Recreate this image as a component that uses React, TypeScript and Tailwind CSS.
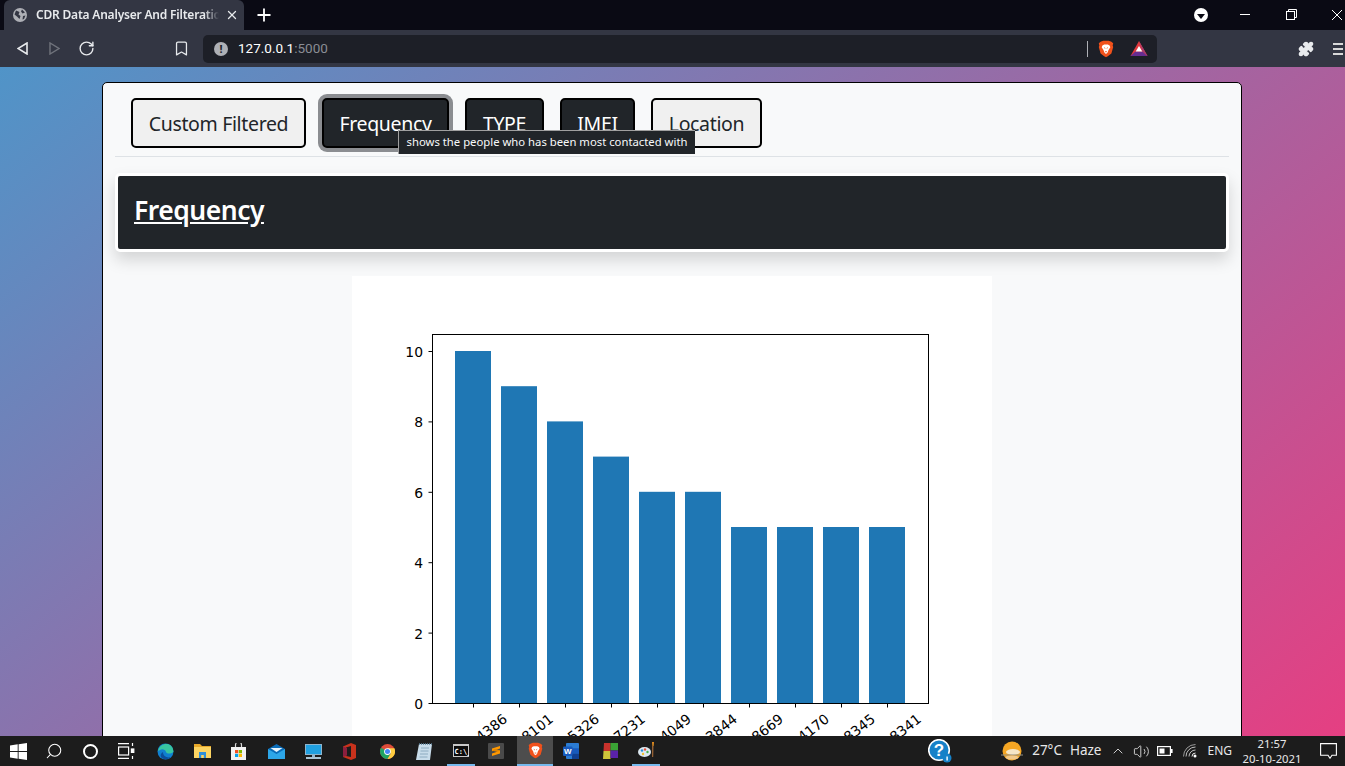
import { Search, Plus, X, Bookmark, RotateCw, Puzzle, ChevronUp, Volume2 } from 'lucide-react';

const bars = [
  { value: 10, label: '9876544386' },
  { value: 9, label: '9812308101' },
  { value: 8, label: '9845615326' },
  { value: 7, label: '9823117231' },
  { value: 6, label: '9812344049' },
  { value: 6, label: '9867123844' },
  { value: 5, label: '9834558669' },
  { value: 5, label: '9876114170' },
  { value: 5, label: '9800128345' },
  { value: 5, label: '9877108341' },
];

const chartFont = '"DejaVu Sans", sans-serif';

function FrequencyChart() {
  const y = (v: number) => 427 - v * 35.2;
  return (
    <svg width="640" height="480" viewBox="0 0 640 480" className="block">
      <rect width="640" height="480" fill="#ffffff" />
      {bars.map((b, i) => (
        <rect key={b.label} x={103 + i * 46} y={y(b.value)} width="36" height={b.value * 35.2} fill="#1f77b4" />
      ))}
      <rect x="80.5" y="58.5" width="496" height="369" fill="none" stroke="#000" strokeWidth="1" />
      {[0, 2, 4, 6, 8, 10].map((v) => (
        <g key={v}>
          <line x1="76.5" x2="80" y1={y(v) + 0.5} y2={y(v) + 0.5} stroke="#000" />
          <text x="71" y={y(v) + 6} textAnchor="end" fontSize="13.9" fontFamily={chartFont} fill="#000">
            {v}
          </text>
        </g>
      ))}
      {bars.map((b, i) => {
        const tx = 121.5 + i * 46;
        return (
          <g key={b.label}>
            <line x1={tx} x2={tx} y1="428" y2="431.5" stroke="#000" />
            <text
              x={tx}
              y="472"
              textAnchor="middle"
              fontSize="13.9"
              fontFamily={chartFont}
              fill="#000"
              transform={`rotate(-38 ${tx} 472)`}
            >
              {b.label}
            </text>
          </g>
        );
      })}
    </svg>
  );
}

function BraveLion({ size = 20 }: { size?: number }) {
  return (
    <svg width={size} height={size} viewBox="0 0 20 20">
      <path d="M4 2 L7 .8 h6 L16 2 l2 1.500 -.6 2.600 .6 1.800 -2 7 -4 3.200 -2 1 -2 -1 -4 -3.200 -2 -7 .6 -1.800 -.6 -2.600z" fill="#f1511b" />
      <path d="M6 6 l2 -1 h4 l2 1 .8 2 -2 3 -1 3 -1.800 1.500 -1.800 -1.500 -1 -3 -2 -3z" fill="#fff" />
      <path d="M8 8.500 l1.200 .8 M12 8.500 l-1.200 .8 M9 13 h2" stroke="#f1511b" strokeWidth="1" />
    </svg>
  );
}

function BatTriangle() {
  return (
    <svg width="18" height="17" viewBox="0 0 18 17">
      <path d="M9 1 L17.500 16 H.5z" fill="#e0393e" />
      <path d="M.5 16 L5.500 11.500 H12.500 L17.500 16z" fill="#662d91" />
      <path d="M9 1 L17.500 16 L12.500 11.500z" fill="#a83c6f" />
      <path d="M9 6 L12.300 11.600 H5.700z" fill="#fff" />
    </svg>
  );
}

function WindowsLogo() {
  return (
    <svg width="17" height="17" viewBox="0 0 17 17" fill="#fff">
      <path d="M0 2.500 7.700 1.300V8H0zM8.600 1.200 17 0v8H8.600zM0 9h7.700v6.700L0 14.500zM8.600 9H17v8l-8.400-1.200z" />
    </svg>
  );
}

function TaskView() {
  return (
    <svg width="17" height="16" viewBox="0 0 17 16" fill="none" stroke="#fff" strokeWidth="1.2">
      <path d="M0 .6h11M0 15.400h11" />
      <rect x=".6" y="4" width="10" height="8" />
      <path d="M14.500 0v3M14.500 13v3" />
      <rect x="13.400" y="6" width="2.400" height="3.400" fill="#fff" />
    </svg>
  );
}

function Edge() {
  return (
    <svg width="17" height="17" viewBox="0 0 17 17">
      <circle cx="8.500" cy="8.500" r="8" fill="#0f7fd0" />
      <path d="M1 8 C2 2 8 0 12 1.500 C15 2.800 16.700 6 16.300 9 C14 11 10 11 9 9 C8.500 6.500 5 5.500 3 7z" fill="#38c5a0" />
      <path d="M6 9 C6 13 10 15.500 14 14 C11 17 6 17 4 14 C3 12 4 10 6 9z" fill="#0b4e9c" />
    </svg>
  );
}

function Explorer() {
  return (
    <svg width="17" height="16" viewBox="0 0 17 16">
      <path d="M0 1h6l2 2h9v12H0z" fill="#e8a92a" />
      <path d="M0 4h17v11H0z" fill="#fcd462" />
      <path d="M5 9h7v6h-2.200v-3H7.200v3H5z" fill="#2f8fd8" />
    </svg>
  );
}

function Store() {
  return (
    <svg width="15" height="17" viewBox="0 0 15 17">
      <path d="M0 4h15v13H0z" fill="#f2f2f2" />
      <path d="M4.500 4V2a3 3 0 0 1 6 0v2" fill="none" stroke="#d8d8d8" strokeWidth="1.200" />
      <rect x="4" y="7" width="3.200" height="3.200" fill="#f25022" />
      <rect x="7.800" y="7" width="3.200" height="3.200" fill="#7fba00" />
      <rect x="4" y="10.800" width="3.200" height="3.200" fill="#00a4ef" />
      <rect x="7.800" y="10.800" width="3.200" height="3.200" fill="#ffb900" />
    </svg>
  );
}

function Mail() {
  return (
    <svg width="17" height="15" viewBox="0 0 17 15">
      <path d="M0 5 8.500 0 17 5v10H0z" fill="#0a6cb8" />
      <path d="M0 5 8.500 10 17 5v10H0z" fill="#2da6e8" />
      <path d="M2.500 4h12L8.500 8z" fill="#e8f4fc" />
    </svg>
  );
}

function Monitor() {
  return (
    <svg width="17" height="15" viewBox="0 0 17 15">
      <rect x="0" y="0" width="17" height="11" fill="#8fb4cc" />
      <rect x="1" y="1" width="15" height="9" fill="#20a0e0" />
      <rect x="7" y="11" width="3" height="2" fill="#8fb4cc" />
      <rect x="1" y="13" width="15" height="2" fill="#a9c4d4" />
    </svg>
  );
}

function Office() {
  return (
    <svg width="13" height="17" viewBox="0 0 13 17">
      <path d="M0 3.500 8 0l5 2v13l-5 2-8-3z" fill="#c8321c" />
      <path d="M3 4.500 8 3v11l-5-1z" fill="#1c1c1c" />
      <path d="M0 3.500 4 5v7.500L0 14z" fill="#8c1f3e" />
    </svg>
  );
}

function Chrome() {
  return (
    <svg width="15" height="15" viewBox="0 0 16 16">
      <circle cx="8" cy="8" r="8" fill="#dd4b39" />
      <path d="M8 8 1.100 4A8 8 0 0 0 8 16l3.500-6z" fill="#1fa463" />
      <path d="M8 4.500h7.300A8 8 0 0 1 8 16l3.500-6z" fill="#ffcd40" />
      <circle cx="8" cy="8" r="3.600" fill="#fff" />
      <circle cx="8" cy="8" r="2.700" fill="#4587f4" />
    </svg>
  );
}

function Notepad() {
  return (
    <svg width="16" height="17" viewBox="0 0 16 17">
      <path d="M3 1h13l-2 16H0z" fill="#c8dcea" />
      <path d="M5 5h8M4.500 8h8M4 11h8M3.500 14h8" stroke="#7d9fb6" strokeWidth=".8" />
      <path d="M3 1h13" stroke="#5a7d95" strokeWidth="1.600" strokeDasharray="1 1" />
    </svg>
  );
}

function Cmd() {
  return (
    <svg width="16" height="13" viewBox="0 0 16 13">
      <rect width="16" height="13" fill="#c8c8c8" />
      <rect x="1" y="2" width="14" height="10" fill="#0c0c0c" />
      <text x="1.500" y="9.500" fontSize="7" fontFamily='"DejaVu Sans Mono", monospace' fontWeight="700" fill="#fff">
        C:\_
      </text>
    </svg>
  );
}

function Sublime() {
  return (
    <svg width="16" height="16" viewBox="0 0 16 16">
      <rect width="16" height="16" rx="1" fill="#4a4a4a" />
      <path d="M4 5.600 12 3v2.600L4 8.200z" fill="#ff9800" />
      <path d="M4 7.400 12 9.700v-2.400L7 6z" fill="#e08600" />
      <path d="M4 10.400 12 7.800v2.600L4 13z" fill="#ff9800" />
    </svg>
  );
}

function Word() {
  return (
    <svg width="16" height="16" viewBox="0 0 16 16">
      <rect x="3" width="13" height="16" rx="1" fill="#2b7cd3" />
      <rect x="9" y="5.300" width="7" height="5.300" fill="#185abd" />
      <rect x="9" y="10.600" width="7" height="5.400" fill="#103f91" />
      <rect y="3.500" width="9.500" height="9.500" rx="1" fill="#185abd" />
      <text x="4.750" y="11" textAnchor="middle" fontSize="8" fontWeight="700" fontFamily='"Liberation Sans", sans-serif' fill="#fff">
        W
      </text>
    </svg>
  );
}

function ColorGrid() {
  return (
    <svg width="15" height="16" viewBox="0 0 15 16">
      <path d="M1 0h6.500v8H.5z" fill="#c8322c" />
      <path d="M7.500 0H15v7.500H7.500z" fill="#3aa335" />
      <path d="M.5 8h7v8H0z" fill="#cfc43a" />
      <path d="M7.500 7.500H15V15H7.500z" fill="#5a22a8" />
    </svg>
  );
}

function Paint() {
  return (
    <svg width="17" height="16" viewBox="0 0 17 16">
      <ellipse cx="6.500" cy="10" rx="6.500" ry="5" fill="#dce8f0" />
      <circle cx="4" cy="8.500" r="1.200" fill="#2a8fd8" />
      <circle cx="7" cy="7.500" r="1.200" fill="#e8503a" />
      <circle cx="9.500" cy="10" r="1.200" fill="#48b050" />
      <circle cx="5" cy="12" r="1.200" fill="#f0c030" />
      <path d="M14 0h2l-.4 4h-1.200z" fill="#e89020" />
      <path d="M14.200 4h1.200l-.2 11h-1z" fill="#b0703a" />
    </svg>
  );
}

function HelpBadge() {
  return (
    <svg width="24" height="24" viewBox="0 0 24 24">
      <circle cx="11" cy="11" r="10.300" fill="#1681c8" stroke="#fff" strokeWidth="1.600" />
      <text x="11" y="17" textAnchor="middle" fontSize="17" fontWeight="700" fontFamily='"Liberation Sans", sans-serif' fill="#fff">
        ?
      </text>
      <circle cx="19" cy="19" r="4.500" fill="#1681c8" />
      <rect x="18.400" y="17.500" width="1.400" height="4" fill="#fff" />
    </svg>
  );
}

function Weather() {
  return (
    <svg width="22" height="20" viewBox="0 0 22 20" className="shrink-0">
      <circle cx="11" cy="10" r="9.500" fill="#f5a623" />
      <ellipse cx="12" cy="11" rx="7" ry="3" fill="#f6e6c6" />
      <path d="M0 14h22" stroke="#8d8d86" strokeWidth="1" />
      <ellipse cx="11" cy="16.500" rx="6.500" ry="2" fill="#f2c98a" />
    </svg>
  );
}

function BatteryTray() {
  return (
    <svg width="16" height="10" viewBox="0 0 16 10" fill="none">
      <rect x=".6" y=".6" width="12.800" height="8.800" stroke="#fff" strokeWidth="1.200" />
      <rect x="2.500" y="2.500" width="5" height="5" fill="#fff" />
      <rect x="14" y="3" width="1.600" height="4" fill="#fff" />
    </svg>
  );
}

function WifiTray() {
  return (
    <svg width="14" height="14" viewBox="0 0 14 14" fill="none" stroke="#e8e8e8" strokeWidth="1">
      <path d="M12.500 9A3.500 3.500 0 0 0 9 12.500" />
      <path d="M12.500 6A6.500 6.500 0 0 0 6 12.500" stroke="#bdbdbd" />
      <path d="M12.500 3A9.500 9.500 0 0 0 3 12.500" stroke="#bdbdbd" />
      <path d="M12.500 .5A12 12 0 0 0 .5 12.500" stroke="#9a9a9a" />
      <circle cx="12" cy="12" r="1.500" fill="#fff" stroke="none" />
    </svg>
  );
}

function TaskIcon({ children, className = '' }: { children: React.ReactNode; className?: string }) {
  return <div className={`flex h-[30px] shrink-0 items-center justify-center ${className}`}>{children}</div>;
}

function Taskbar() {
  return (
    <footer className="z-10 flex h-[30px] shrink-0 items-center bg-[#1c1c1c] text-[#e8e8e8]">
      <TaskIcon className="w-9"><WindowsLogo /></TaskIcon>
      <TaskIcon className="w-9"><Search size={18} strokeWidth={1.4} className="-scale-x-100 text-white" /></TaskIcon>
      <TaskIcon className="w-9"><div className="h-[15px] w-[15px] rounded-full border-[2.5px] border-white" /></TaskIcon>
      <TaskIcon className="w-9"><TaskView /></TaskIcon>
      <TaskIcon className="ml-[3px] w-9"><Edge /></TaskIcon>
      <TaskIcon className="ml-px w-9"><Explorer /></TaskIcon>
      <TaskIcon className="w-9"><Store /></TaskIcon>
      <TaskIcon className="ml-[2px] w-9"><Mail /></TaskIcon>
      <TaskIcon className="ml-px w-9"><Monitor /></TaskIcon>
      <TaskIcon className="w-9"><Office /></TaskIcon>
      <TaskIcon className="ml-[2px] w-9"><Chrome /></TaskIcon>
      <TaskIcon className="ml-px w-9"><Notepad /></TaskIcon>
      <TaskIcon className="ml-[5px] w-[28px] border-b-[2px] border-[#76b9ed]"><Cmd /></TaskIcon>
      <TaskIcon className="w-[42px]"><Sublime /></TaskIcon>
      <TaskIcon className="w-9 border-b-[2px] border-[#76b9ed] bg-[#4d4d4d]"><BraveLion size={17} /></TaskIcon>
      <TaskIcon className="w-9"><Word /></TaskIcon>
      <TaskIcon className="w-[43px]"><ColorGrid /></TaskIcon>
      <TaskIcon className="w-[28px] border-b-[2px] border-[#76b9ed]"><Paint /></TaskIcon>
      <div className="flex-1" />
      <TaskIcon className="w-6"><HelpBadge /></TaskIcon>
      <TaskIcon className="ml-[48px] w-6"><Weather /></TaskIcon>
      <span className="ml-[8px] text-[13.5px] leading-none font-['Noto_Sans',sans-serif]">27°C</span>
      <span className="ml-[8px] text-[13.5px] leading-none font-['Noto_Sans',sans-serif]">Haze</span>
      <TaskIcon className="ml-[9px] w-4"><ChevronUp size={18} strokeWidth={1.3} /></TaskIcon>
      <TaskIcon className="ml-[5px] w-5"><Volume2 size={17} strokeWidth={1.2} /></TaskIcon>
      <TaskIcon className="ml-[6px] w-4"><BatteryTray /></TaskIcon>
      <TaskIcon className="ml-[9px] w-4"><WifiTray /></TaskIcon>
      <span className="ml-[9px] text-[12px] leading-none font-['Noto_Sans',sans-serif]">ENG</span>
      <div className="ml-[11px] flex w-[58px] flex-col items-center text-[11.3px] leading-[15px] font-['Noto_Sans',sans-serif]">
        <span>21:57</span>
        <span className="whitespace-nowrap">20-10-2021</span>
      </div>
      <TaskIcon className="ml-[19px] mr-[8px] w-[17px]">
        <svg width="17" height="16" viewBox="0 0 17 16" fill="none" stroke="#fff" strokeWidth="1.100">
          <path d="M.6.6h15.800v11.600H12l-2 3-2-3H.6z" />
        </svg>
      </TaskIcon>
    </footer>
  );
}

function BrowserChrome() {
  return (
    <header className="shrink-0 font-['Noto_Sans',sans-serif]">
      <div className="flex h-[30px] items-end bg-[#0a0a14] pl-[4px]">
        <div className="flex h-[30px] w-[240px] items-center rounded-t-[6px] bg-[#333643] pl-[9px] pr-[5px] text-white">
          <svg width="14" height="14" viewBox="0 0 14 14" className="shrink-0">
            <circle cx="7" cy="7" r="7" fill="#aeb0b6" />
            <path d="M3 2.500 6.500 4 5.500 6.500 7.500 8 6.500 11 4 8.500 1.500 6.500zM9 1.500l3 3-2.500 1L8 3.500zM10 8l2.500-.5L11 11l-1.500.5z" fill="#333643" />
          </svg>
          <span className="ml-[9px] w-[183px] overflow-hidden whitespace-nowrap text-[12px] font-semibold tracking-[-0.2px] text-[#e8eaed] [mask-image:linear-gradient(to_right,#000_92%,transparent)]">
            CDR Data Analyser And Filteration Tool
          </span>
          <X size={14} strokeWidth={2.2} className="ml-auto shrink-0 text-[#e8eaed]" />
        </div>
        <Plus size={20} strokeWidth={2.2} className="mb-[5px] ml-[10px] text-white" />
        <div className="flex-1" />
        <div className="mb-[8px] flex h-[14px] w-[14px] items-center justify-center rounded-full bg-white">
          <div className="mt-[2px] h-0 w-0 border-x-[4px] border-t-[5px] border-x-transparent border-t-[#0a0a14]" />
        </div>
        <div className="mb-[15px] ml-[32px] h-px w-[10px] bg-white" />
        <svg width="11" height="11" viewBox="0 0 11 11" fill="none" stroke="#fff" strokeWidth="1" className="mb-[10px] ml-[36px]">
          <path d="M2.500 2.500V.5h8v8H8.500" />
          <rect x=".5" y="2.500" width="8" height="8" />
        </svg>
        <svg width="10" height="10" viewBox="0 0 10 10" fill="none" stroke="#fff" strokeWidth="1" className="mb-[10px] ml-[35px] mr-[3px]">
          <path d="M0 0l10 10M10 0L0 10" />
        </svg>
      </div>
      <div className="flex h-[37px] items-center bg-[#333643]">
        <svg width="11" height="13" viewBox="0 0 11 13" fill="none" stroke="#e8eaed" strokeWidth="1.600" className="ml-[17px]">
          <path d="M10 1v11L1 6.500z" />
        </svg>
        <svg width="11" height="13" viewBox="0 0 11 13" fill="none" stroke="#70737c" strokeWidth="1.400" className="ml-[21px]">
          <path d="M1 1v11l9-5.500z" />
        </svg>
        <RotateCw size={17} strokeWidth={2} className="ml-[18px] text-[#e8eaed]" />
        <Bookmark size={17} strokeWidth={1.8} className="ml-[78px] text-[#e8eaed]" />
        <div className="ml-[13px] flex h-[28px] w-[954px] items-center rounded-[5px] bg-[#1d1f27] pl-[11px]">
          <div className="flex h-[14px] w-[14px] items-center justify-center rounded-full bg-[#aeb0b6] text-[11px] font-bold leading-none text-[#1d1f27]">!</div>
          <span className="ml-[10px] font-['Roboto',sans-serif] text-[13.5px] text-white">
            127.0.0.1<span className="text-[#8a8d94]">:5000</span>
          </span>
          <div className="flex-1" />
          <div className="h-[16px] w-px bg-[#aeb0b6]" />
          <div className="ml-[9px]"><BraveLion size={18} /></div>
          <div className="ml-[15px] mr-[9px]"><BatTriangle /></div>
        </div>
        <Puzzle size={16} strokeWidth={2} fill="#e8eaed" className="ml-[141px] text-[#e8eaed]" />
        <div className="ml-[19px] flex w-[10px] flex-col gap-[3px]">
          <div className="h-[2px] bg-[#d8d8d8]" />
          <div className="h-[2px] bg-[#d8d8d8]" />
          <div className="h-[2px] bg-[#d8d8d8]" />
        </div>
      </div>
    </header>
  );
}

const navClass = 'h-[50px] rounded-[5px] border-2 pt-[2px] text-[19.5px] leading-none tracking-[-0.35px]';
const navLight = `${navClass} border-black bg-[#f0f0f0] text-[#212529]`;
const navDark = `${navClass} border-black bg-[#212529] text-white`;

export default function App() {
  return (
    <div className="flex h-[766px] w-[1345px] flex-col overflow-hidden">
      <BrowserChrome />
      <main className="min-h-0 flex-1 overflow-hidden bg-[linear-gradient(141deg,#5094c8,#e53f82)] px-[102px] pt-[15px] font-['Noto_Sans',sans-serif]">
        <section className="w-[1140px] rounded-t-[5px] border border-black bg-[#f8f9fa] px-[12px] pb-10">
          <nav className="relative flex h-[74px] items-start gap-4 border-b border-[#dee2e6] pl-[16px] pt-[15px]">
            <button className={`${navLight} w-[175px]`}>Custom Filtered</button>
            <button className={`${navDark} w-[127px] ring-[4px] ring-[#8b8d91]`}>Frequency</button>
            <button className={`${navDark} w-[79px]`}>TYPE</button>
            <button className={`${navDark} w-[75px]`}>IMEI</button>
            <button className={`${navLight} w-[111px]`}>Location</button>
            <div className="absolute left-[283px] top-[47px] flex h-[24px] w-[297px] items-center justify-center border-l border-t border-[#a0a0a0] bg-[#212529] text-[11.3px] text-[#f8f9fa]">
              shows the people who has been most contacted with
            </div>
          </nav>
          <div className="mt-[16px] rounded-[5px] border-[3px] border-white bg-[#212529] pb-[18px] pl-[16px] pt-[14px] shadow-[0_8px_16px_rgba(0,0,0,0.15)]">
            <h1 className="text-[26.5px] font-semibold leading-[41px] tracking-[-0.5px] text-white underline">Frequency</h1>
          </div>
          <div className="mx-auto mt-[24px] w-[640px]">
            <FrequencyChart />
          </div>
        </section>
      </main>
      <Taskbar />
    </div>
  );
}
